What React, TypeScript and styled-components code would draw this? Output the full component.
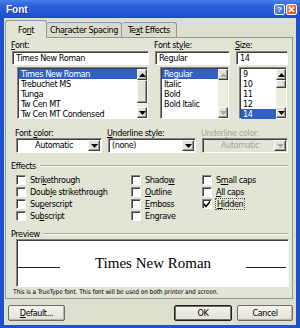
import styled, { createGlobalStyle, css } from "styled-components"

const UI = `"DejaVu Sans Condensed", "Liberation Sans", Arial, sans-serif`

const GlobalStyle = createGlobalStyle`
  html, body { margin: 0; padding: 0; }
  body { width: 300px; height: 328px; overflow: hidden; background: #ffffff; }
`

type Effect = { pre: string; acc: string; post: string; checked?: boolean; focused?: boolean }

const FONTS = ["Times New Roman", "Trebuchet MS", "Tunga", "Tw Cen MT", "Tw Cen MT Condensed"]
const STYLES = ["Regular", "Italic", "Bold", "Bold Italic"]
const SIZES = ["9", "10", "11", "12", "14"]

// column-major, the grid flows down first
const EFFECTS: Effect[] = [
  { pre: "Stri", acc: "k", post: "ethrough" },
  { pre: "Doub", acc: "l", post: "e strikethrough" },
  { pre: "Su", acc: "p", post: "erscript" },
  { pre: "Su", acc: "b", post: "script" },
  { pre: "Shado", acc: "w", post: "" },
  { pre: "", acc: "O", post: "utline" },
  { pre: "", acc: "E", post: "mboss" },
  { pre: "En", acc: "g", post: "rave" },
  { pre: "S", acc: "m", post: "all caps" },
  { pre: "", acc: "A", post: "ll caps" },
  { pre: "", acc: "H", post: "idden", checked: true, focused: true },
]

const Arrow = ({ dir, disabled }: { dir: "up" | "down"; disabled?: boolean }) => (
  <svg width="7" height="4" viewBox="0 0 7 4">
    <polygon
      points={dir === "up" ? "3.5,0 7,4 0,4" : "0,0 7,0 3.5,4"}
      fill={disabled ? "#a8a8a0" : "#000"}
    />
  </svg>
)

const App = () => {
  return (
    <>
      <GlobalStyle />
      <Window>
        <TitleBar>
          <TitleText>Font</TitleText>
          <CaptionButtons>
            <CaptionButton $kind="help">?</CaptionButton>
            <CaptionButton $kind="close">
              <svg width="7" height="7" viewBox="0 0 7 7">
                <path d="M1 1 L6 6 M6 1 L1 6" stroke="#fff" strokeWidth="1.6" />
              </svg>
            </CaptionButton>
          </CaptionButtons>
        </TitleBar>

        <Body>
          <Tabs>
            <Tab $active $w={42}>Fo<u>n</u>t</Tab>
            <Tab $w={75}>Cha<u>r</u>acter Spacing</Tab>
            <Tab $w={55}>Te<u>x</u>t Effects</Tab>
          </Tabs>

          <Panel>
            <FontGrid>
              <Column>
                <Label><u>F</u>ont:</Label>
                <TextBox>Times New Roman</TextBox>
                <ListBox $indent={5}>
                  <Items>
                    {FONTS.map((f, i) => (
                      <Item key={f} $selected={i === 0}>{f}</Item>
                    ))}
                  </Items>
                  <ScrollBar>
                    <ArrowButton><Arrow dir="up" /></ArrowButton>
                    <Track>
                      <Thumb $offset={0} $h={23} />
                    </Track>
                    <ArrowButton><Arrow dir="down" /></ArrowButton>
                  </ScrollBar>
                </ListBox>
              </Column>
              <Column>
                <Label>Font st<u>y</u>le:</Label>
                <TextBox>Regular</TextBox>
                <ListBox $indent={5}>
                  <Items>
                    {STYLES.map((s, i) => (
                      <Item key={s} $selected={i === 0}>{s}</Item>
                    ))}
                  </Items>
                  <ScrollBar>
                    <ArrowButton><Arrow dir="up" disabled /></ArrowButton>
                    <Track />
                    <ArrowButton><Arrow dir="down" disabled /></ArrowButton>
                  </ScrollBar>
                </ListBox>
              </Column>
              <Column>
                <Label><u>S</u>ize:</Label>
                <TextBox>14</TextBox>
                <ListBox $indent={3}>
                  <Items>
                    {SIZES.map((s, i) => (
                      <Item key={s} $selected={i === SIZES.length - 1}>{s}</Item>
                    ))}
                  </Items>
                  <ScrollBar>
                    <ArrowButton><Arrow dir="up" /></ArrowButton>
                    <Track>
                      <Thumb $offset={0} $h={8} />
                    </Track>
                    <ArrowButton><Arrow dir="down" /></ArrowButton>
                  </ScrollBar>
                </ListBox>
              </Column>
            </FontGrid>

            <ComboGrid>
              <Column>
                <Label>Font <u>c</u>olor:</Label>
                <Combo>
                  <ComboValue $center>Automatic</ComboValue>
                  <DropButton><Arrow dir="down" /></DropButton>
                </Combo>
              </Column>
              <Column>
                <Label><u>U</u>nderline style:</Label>
                <Combo>
                  <ComboValue>(none)</ComboValue>
                  <DropButton><Arrow dir="down" /></DropButton>
                </Combo>
              </Column>
              <Column>
                <Label $disabled>Underl<u>i</u>ne color:</Label>
                <Combo $disabled>
                  <ComboValue $center $disabled>Automatic</ComboValue>
                  <DropButton><Arrow dir="down" disabled /></DropButton>
                </Combo>
              </Column>
            </ComboGrid>

            <GroupHeader $top={8}>
              <span>Effects</span>
              <Rule />
            </GroupHeader>

            <EffectsGrid>
              {EFFECTS.map((e) => (
                <CheckRow key={e.pre + e.acc + e.post}>
                  <CheckBox>
                    {e.checked && (
                      <svg width="8" height="8" viewBox="0 0 8 8">
                        <polyline points="1,4 3,6.5 7,1.5" fill="none" stroke="#000" strokeWidth="1.6" />
                      </svg>
                    )}
                  </CheckBox>
                  <CheckLabel $focused={e.focused}>
                    {e.pre}<u>{e.acc}</u>{e.post}
                  </CheckLabel>
                </CheckRow>
              ))}
            </EffectsGrid>

            <GroupHeader $top={6}>
              <span>Preview</span>
              <Rule />
            </GroupHeader>

            <PreviewBox>
              <PreviewLine $w={42} />
              <PreviewText>Times New Roman</PreviewText>
              <PreviewLine $w={40} />
            </PreviewBox>

            <Note>This is a TrueType font. This font will be used on both printer and screen.</Note>
          </Panel>

          <ButtonRow>
            <Button $w={57}><u>D</u>efault...</Button>
            <Spacer />
            <Button $w={58} $default>OK</Button>
            <Button $w={56}>Cancel</Button>
          </ButtonRow>
        </Body>
      </Window>
    </>
  )
}

export default App

const Window = styled.div`
  width: 300px;
  height: 328px;
  box-sizing: border-box;
  display: flex;
  flex-direction: column;
  background: #2150cc;
  font-family: ${UI};
  font-size: 9px;
  letter-spacing: -0.4px;
  color: #000;
`

const TitleBar = styled.div`
  height: 18px;
  display: flex;
  align-items: center;
  justify-content: space-between;
  padding: 0 3px 0 6px;
  background: linear-gradient(#4a7fe6, #2a5fdc 35%, #2356d4 80%, #1d49c2);
`

const TitleText = styled.div`
  color: #fff;
  font-family: "Liberation Sans", Arial, sans-serif;
  font-weight: bold;
  font-size: 10px;
  letter-spacing: 0;
  text-shadow: 1px 1px 0 #14318a;
`

const CaptionButtons = styled.div`
  display: flex;
  gap: 1px;
  margin-top: 1px;
`

const CaptionButton = styled.div<{ $kind: "help" | "close" }>`
  width: 11px;
  height: 11px;
  box-sizing: border-box;
  border: 1px solid #fff;
  border-radius: 2px;
  display: flex;
  align-items: center;
  justify-content: center;
  color: #fff;
  font-family: "Liberation Sans", Arial, sans-serif;
  font-weight: bold;
  font-size: 8px;
  letter-spacing: 0;
  background: ${(p) =>
    p.$kind === "help"
      ? "linear-gradient(135deg, #6a9cf0, #2d62d8)"
      : "linear-gradient(135deg, #f09070, #d8461c)"};
`

const Body = styled.div`
  flex: 1;
  margin: 0 4px 3px 4px;
  padding: 2px 3px 0 1px;
  background: #dde0ce;
  display: flex;
  flex-direction: column;
`

const Tabs = styled.div`
  display: flex;
  align-items: flex-end;
  height: 17px;
`

const Tab = styled.div<{ $active?: boolean; $w: number }>`
  box-sizing: border-box;
  width: ${(p) => p.$w}px;
  display: flex;
  align-items: center;
  justify-content: center;
  white-space: nowrap;
  border: 1px solid #8e9a9c;
  border-bottom: none;
  border-radius: 3px 3px 0 0;
  ${(p) =>
    p.$active
      ? css`
          height: 18px;
          margin-bottom: -1px;
          background: #e2e4d5;
          position: relative;
          z-index: 1;
        `
      : css`
          height: 15px;
          background: #d8dbc9;
          border-left: none;
        `}
`

const Panel = styled.div`
  height: 262px;
  box-sizing: border-box;
  border: 1px solid #8e9a9c;
  background: #e2e4d5;
  padding: 0 4px 0 6px;
  display: flex;
  flex-direction: column;
`

const FontGrid = styled.div`
  display: grid;
  grid-template-columns: 137px 75px 52px;
  column-gap: 6px;
  margin-top: 2px;
`

const Column = styled.div`
  display: flex;
  flex-direction: column;
  min-width: 0;
`

const Label = styled.div<{ $disabled?: boolean }>`
  height: 10px;
  line-height: 10px;
  white-space: nowrap;
  margin-left: -1px;
  color: ${(p) => (p.$disabled ? "#a4a89a" : "#000")};
`

const Sunken = css`
  box-sizing: border-box;
  border: 1px solid;
  border-color: #848484 #ffffff #ffffff #848484;
  box-shadow: inset 1px 1px 0 #404040;
`

const TextBox = styled.div`
  ${Sunken};
  height: 14px;
  margin-top: 1px;
  padding: 0 0 0 3px;
  line-height: 12px;
  background: #fff;
  white-space: nowrap;
`

const ListBox = styled.div<{ $indent: number }>`
  ${Sunken};
  height: 52px;
  margin: 2px 1px 0 ${(p) => p.$indent}px;
  background: #fff;
  display: flex;
  padding: 1px 0 0 1px;
`

const Items = styled.div`
  flex: 1;
  min-width: 0;
`

const Item = styled.div<{ $selected?: boolean }>`
  height: 10px;
  line-height: 10px;
  padding-left: 2px;
  white-space: nowrap;
  overflow: hidden;
  background: ${(p) => (p.$selected ? "#3160c4" : "transparent")};
  color: ${(p) => (p.$selected ? "#fff" : "#000")};
`

const ScrollBar = styled.div`
  width: 10px;
  display: flex;
  flex-direction: column;
  background: #eeede4;
`

const Raised = css`
  box-sizing: border-box;
  background: #e4e3d8;
  border: 1px solid;
  border-color: #f8f8f4 #404040 #404040 #f8f8f4;
  box-shadow: inset -1px -1px 0 #9c9c94;
`

const ArrowButton = styled.div`
  ${Raised};
  height: 11px;
  display: flex;
  align-items: center;
  justify-content: center;
`

const Track = styled.div`
  flex: 1;
  display: flex;
  flex-direction: column;
`

const Thumb = styled.div<{ $offset: number; $h: number }>`
  ${Raised};
  margin-top: ${(p) => p.$offset}px;
  height: ${(p) => p.$h}px;
`

const ComboGrid = styled.div`
  display: grid;
  grid-template-columns: 86px 88px 86px;
  column-gap: 6px;
  margin: 9px 0 0 4px;
`

const Combo = styled.div<{ $disabled?: boolean }>`
  ${Sunken};
  height: 15px;
  display: flex;
  padding: 1px 1px 1px 1px;
  background: ${(p) => (p.$disabled ? "#e2e4d5" : "#fff")};
`

const ComboValue = styled.div<{ $center?: boolean; $disabled?: boolean }>`
  flex: 1;
  line-height: 11px;
  padding-left: 2px;
  text-align: ${(p) => (p.$center ? "center" : "left")};
  color: ${(p) => (p.$disabled ? "#a4a89a" : "#000")};
`

const DropButton = styled.div`
  ${Raised};
  width: 12px;
  display: flex;
  align-items: center;
  justify-content: center;
`

const GroupHeader = styled.div<{ $top: number }>`
  display: flex;
  align-items: center;
  gap: 4px;
  height: 10px;
  line-height: 10px;
  margin: ${(p) => p.$top}px 0 0 -1px;
`

const Rule = styled.div`
  flex: 1;
  border-top: 1px solid #a8ab9c;
  border-bottom: 1px solid #fafaf4;
`

const EffectsGrid = styled.div`
  display: grid;
  grid-auto-flow: column;
  grid-template-rows: repeat(4, 12px);
  grid-template-columns: 115px 71px 1fr;
  margin: 4px 0 0 4px;
`

const CheckRow = styled.div`
  display: flex;
  align-items: flex-start;
  gap: 3px;
  white-space: nowrap;
`

const CheckBox = styled.div`
  ${Sunken};
  width: 10px;
  height: 10px;
  background: #fff;
  display: flex;
  align-items: center;
  justify-content: center;
`

const CheckLabel = styled.span<{ $focused?: boolean }>`
  line-height: 10px;
  padding: 0 1px;
  margin-top: ${(p) => (p.$focused ? "-1px" : "0")};
  border: ${(p) => (p.$focused ? "1px dotted #555" : "none")};
`

const PreviewBox = styled.div`
  ${Sunken};
  height: 48px;
  margin: 0 -1px 0 4px;
  background: #fff;
  display: flex;
  align-items: center;
  justify-content: space-between;
  padding: 0 2px 0 1px;
`

const PreviewLine = styled.div<{ $w: number }>`
  width: ${(p) => p.$w}px;
  height: 1px;
  background: #222;
  margin-top: 9px;
`

const PreviewText = styled.div`
  font-family: "Liberation Serif", "Times New Roman", serif;
  font-size: 15px;
  letter-spacing: 0;
  color: #000;
`

const Note = styled.div`
  height: 9px;
  line-height: 9px;
  margin: 1px 0 0 1px;
  font-size: 6.5px;
  letter-spacing: -0.1px;
  white-space: nowrap;
`

const ButtonRow = styled.div`
  display: flex;
  gap: 5px;
  margin: 6px 0 0 3px;
`

const Spacer = styled.div`
  flex: 1;
`

const Button = styled.div<{ $w: number; $default?: boolean }>`
  box-sizing: border-box;
  width: ${(p) => p.$w}px;
  height: 16px;
  display: flex;
  align-items: center;
  justify-content: center;
  background: linear-gradient(#f4f4ee, #e2e2d8);
  border: 1px solid ${(p) => (p.$default ? "#202020" : "#6c6c64")};
  border-radius: 2px;
  box-shadow: ${(p) => (p.$default ? "inset 0 0 0 1px #6c6c64" : "inset -1px -1px 0 #b4b4a8")};
`
